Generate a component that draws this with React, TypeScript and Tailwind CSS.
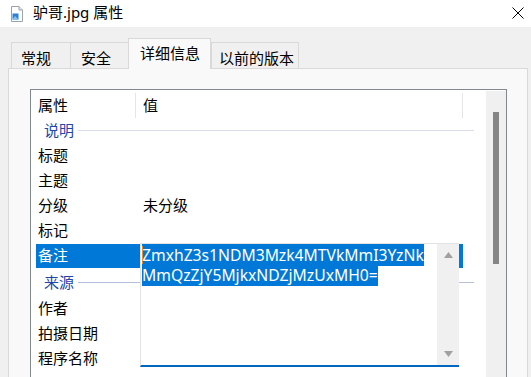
import { FC } from "react";

const cjk = { fontFamily: '"Segoe UI", "Noto Sans", "Noto Sans CJK SC", sans-serif' };

interface Row {
  label: string;
  value?: string;
  group?: boolean;
  selected?: boolean;
  tall?: boolean;
}

const rows: Row[] = [
  { label: "说明", group: true },
  { label: "标题" },
  { label: "主题" },
  { label: "分级", value: "未分级" },
  { label: "标记" },
  { label: "备注", selected: true },
  { label: "来源", group: true, tall: true },
  { label: "作者" },
  { label: "拍摄日期" },
  { label: "程序名称" },
];

const tabs = [
  { name: "常规", cls: "w-[59px] pl-[9px]" },
  { name: "安全", cls: "w-[58px] pl-[10px]" },
  { name: "详细信息", cls: "w-[83px] pl-[11px]", active: true },
  { name: "以前的版本", cls: "w-[88px] pl-[7px]" },
];

const FileIcon: FC = () => (
  <svg width="12" height="16" viewBox="0 0 12 16">
    <path d="M0.5 0.5 H8 L11.5 4 V15.5 H0.5 Z" fill="#fff" stroke="#9aa3ad" />
    <path d="M8 0.5 V4 H11.5" fill="#e6e9ed" stroke="#9aa3ad" />
    <rect x="1.5" y="7.5" width="6" height="6" fill="#2f7fd6" />
    <path d="M1.5 13.5 L4 10 L7.5 13.5 Z" fill="#7cc3f0" />
  </svg>
);

// edit box that sits over the 备注 row
const NoteEditor: FC = () => (
  <div className="absolute left-[109px] top-[153px] w-[319px] h-[124px] bg-white border-t border-l border-[#e3e3e3] border-b-2 border-b-[#0067c0] flex">
    <div className="flex-1 pl-[1px] pt-[1px] text-[15.7px] leading-[20px] text-white relative">
      <div>
        <span className="bg-[#0078d7]">ZmxhZ3s1NDM3Mzk4MTVkMmI3YzNk</span>
      </div>
      <div>
        <span className="bg-[#0078d7]">MmQzZjY5MjkxNDZjMzUxMH0=</span>
      </div>
      <div className="absolute left-[1px] top-[2px] w-[1px] h-[18px] bg-[#f08a24]" />
    </div>
    <div className="w-[22px] bg-[#f0f0f0] flex flex-col items-center justify-between py-[8px]">
      <svg width="9" height="6" viewBox="0 0 9 6">
        <path d="M0 6 L4.5 0 L9 6 Z" fill="#a0a0a0" />
      </svg>
      <svg width="9" height="6" viewBox="0 0 9 6">
        <path d="M0 0 L4.5 6 L9 0 Z" fill="#a0a0a0" />
      </svg>
    </div>
  </div>
);

const App: FC = () => {
  return (
    <div className="w-[531px] h-[377px] overflow-hidden bg-[#f0f0f0] flex flex-col text-black" style={cjk}>
      {/* title bar */}
      <div className="h-[27px] bg-white flex items-center pl-[11px] pr-[7px] shrink-0">
        <FileIcon />
        <span className="ml-[10px] text-[15px] leading-none mb-[2px]">驴哥.jpg 属性</span>
        <svg className="ml-auto mb-[2px]" width="12" height="12" viewBox="0 0 12 12">
          <path d="M0.5 0.5 L11.5 11.5 M11.5 0.5 L0.5 11.5" stroke="#000" strokeWidth="1" />
        </svg>
      </div>

      {/* tabs */}
      <div className="h-[41px] flex items-end pl-[11px] shrink-0">
        {tabs.map((t) =>
          t.active ? (
            <div
              key={t.name}
              className={`${t.cls} h-[31px] -mb-[1px] bg-[#f9f9f9] border border-b-0 border-[#d9d9d9] flex pt-[3px] text-[15px] relative z-10`}
            >
              {t.name}
            </div>
          ) : (
            <div
              key={t.name}
              className={`${t.cls} h-[26px] bg-[#f0f0f0] border border-b-0 border-r-0 last:border-r border-[#d9d9d9] flex pt-[4px] text-[15px]`}
            >
              {t.name}
            </div>
          )
        )}
      </div>

      {/* tab panel */}
      <div className="ml-[8px] w-[520px] flex-1 bg-[#f9f9f9] border border-[#d9d9d9] pl-[21px] pt-[20px]">
        <div className="w-[477px] h-[320px] bg-white border border-[#828790] flex">
          <div className="flex-1 relative text-[15px] pt-[2px]">
            {/* header */}
            <div className="h-[26px] flex items-center">
              <div className="w-[104px] pl-[7px]">属性</div>
              <div className="w-[1px] h-[25px] bg-[#e5e5e5]" />
              <div className="w-[326px] pl-[7px]">值</div>
              <div className="w-[1px] h-[25px] bg-[#e5e5e5]" />
            </div>

            {rows.map((r) =>
              r.group ? (
                <div key={r.label} className={`${r.tall ? "h-[28px]" : "h-[25px]"} flex items-center pl-[13px]`}>
                  <span className="text-[#2146a8] pr-[4px]">{r.label}</span>
                  <div className={`w-[396px] h-[1px] ${r.tall ? "bg-[#b4c0dc]" : "bg-[#d8dbe8]"}`} />
                </div>
              ) : (
                <div key={r.label} className="h-[25px] flex items-center">
                  <div
                    className={`ml-[5px] w-[104px] h-[24px] flex items-center pl-[2px] ${
                      r.selected ? "bg-[#0078d7] text-white" : ""
                    }`}
                  >
                    {r.label}
                  </div>
                  <div className={`w-[323px] h-[24px] flex items-center pl-[3px] ${r.selected ? "bg-[#0078d7]" : ""}`}>
                    {r.value}
                  </div>
                </div>
              )
            )}

            <NoteEditor />
          </div>

          {/* scrollbar */}
          <div className="w-[20px] mt-[1px] bg-[#f0f0f0] flex justify-center pt-[21px]">
            <div className="w-[6px] h-[152px] bg-[#858585]" />
          </div>
        </div>
      </div>
    </div>
  );
};

export default App;
